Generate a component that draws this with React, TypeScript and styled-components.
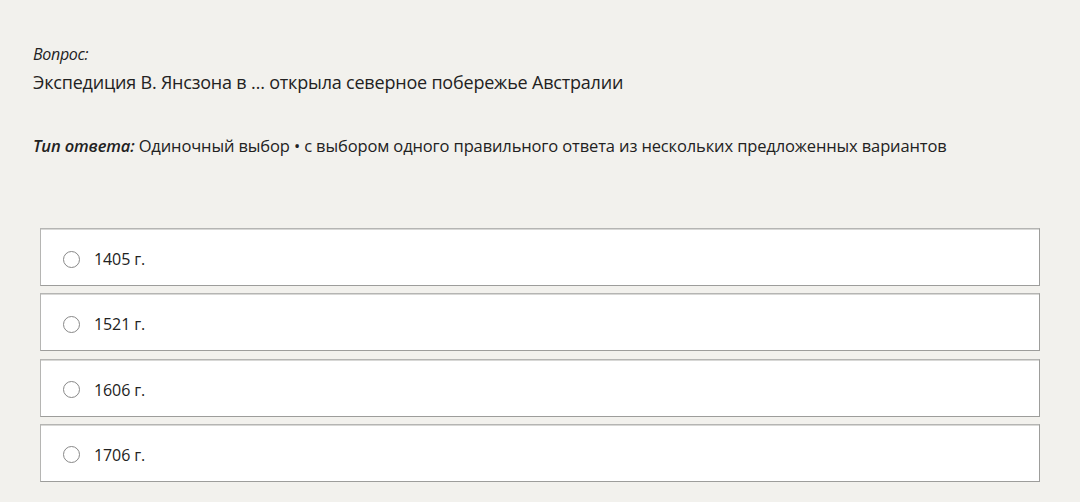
import styled, { createGlobalStyle } from "styled-components";

const GlobalStyle = createGlobalStyle`
    html, body {
        margin: 0;
        padding: 0;
        background: #f2f1ed;
    }
    body {
        font-family: "Open Sans", "Noto Sans", sans-serif;
        color: #222;
    }
`

type Option = {
    id: string
    label: string
}

const options: Option[] = [
    {id: "a", label: "1405 г."},
    {id: "b", label: "1521 г."},
    {id: "c", label: "1606 г."},
    {id: "d", label: "1706 г."},
]

export default function App() {
    return (
        <>
            <GlobalStyle/>
            <Page>
                <QuestionLabel>Вопрос:</QuestionLabel>
                <QuestionText>Экспедиция В. Янсзона в … открыла северное побережье Австралии</QuestionText>
                <AnswerType>
                    <AnswerTypeLabel>Тип ответа:</AnswerTypeLabel> Одиночный выбор • с выбором одного правильного ответа из нескольких предложенных вариантов
                </AnswerType>
                <OptionList>
                    {options.map(o => (
                        <OptionRow key={o.id}>
                            <Radio/>
                            <OptionText>{o.label}</OptionText>
                        </OptionRow>
                    ))}
                </OptionList>
            </Page>
        </>
    )
}

const Page = styled.div`
    width: 1080px;
    height: 502px;
    box-sizing: border-box;
    padding: 43px 40px 0 33px;
    overflow: hidden;
`

const QuestionLabel = styled.div`
    font-size: 16px;
    font-style: italic;
    line-height: 22px;
    letter-spacing: -0.3px;
`

const QuestionText = styled.div`
    margin-top: 4px;
    font-size: 18px;
    line-height: 26px;
    letter-spacing: -0.2px;
`

const AnswerType = styled.div`
    margin-top: 39px;
    font-size: 16.5px;
    line-height: 24px;
    letter-spacing: -0.13px;
`

const AnswerTypeLabel = styled.span`
    font-weight: 600;
    font-style: italic;
`

const OptionList = styled.div`
    margin-top: 70px;
    margin-left: 7px;
    display: flex;
    flex-direction: column;
    gap: 7.3px;
`

const OptionRow = styled.label`
    height: 58px;
    box-sizing: border-box;
    display: flex;
    align-items: center;
    padding: 4px 0 0 22px;
    background: #fff;
    border: 1px solid #b5b5b3;
    border-bottom-color: #9d9d9b;
    border-right-color: #9d9d9b;
    box-shadow: inset 0 1px 0 #d8d8d6;
`

const Radio = styled.span`
    width: 17px;
    height: 17px;
    box-sizing: border-box;
    border: 1px solid #888;
    border-radius: 50%;
    flex-shrink: 0;
`

const OptionText = styled.span`
    margin-left: 14px;
    font-size: 16px;
    letter-spacing: -0.1px;
`
